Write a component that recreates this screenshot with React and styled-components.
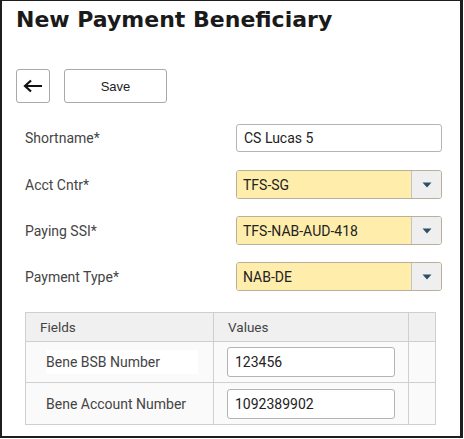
import React from 'react';
import styled, { createGlobalStyle } from 'styled-components';

const GlobalStyle = createGlobalStyle`
  html, body {
    margin: 0;
    padding: 0;
    background: #fff;
  }
  body {
    font-family: Roboto, "Liberation Sans", sans-serif;
  }
`;

const rows = [
  { label: 'Shortname*', value: 'CS Lucas 5', select: false },
  { label: 'Acct Cntr*', value: 'TFS-SG', select: true },
  { label: 'Paying SSI*', value: 'TFS-NAB-AUD-418', select: true },
  { label: 'Payment Type*', value: 'NAB-DE', select: true },
];

const fields = [
  { name: 'Bene BSB Number', value: '123456', boxed: true },
  { name: 'Bene Account Number', value: '1092389902', boxed: false },
];

function ArrowLeft() {
  return (
    <svg width="20" height="14" viewBox="0 0 20 14">
      <path d="M19 7H2.5M8 1.5L2 7l6 5.5" fill="none" stroke="#111" strokeWidth="2.2" />
    </svg>
  );
}

function Caret() {
  return (
    <svg width="10" height="6" viewBox="0 0 10 6">
      <path d="M0.5 0.5h9L5 5.5z" fill="#2f4e66" />
    </svg>
  );
}

export default function App() {
  return (
    <>
      <GlobalStyle />
      <Frame>
        <Title>New Payment Beneficiary</Title>
        <Toolbar>
          <IconButton aria-label="Back"><ArrowLeft /></IconButton>
          <SaveButton>Save</SaveButton>
        </Toolbar>
        <Form>
          {rows.map(r => (
            <Row key={r.label}>
              <Label>{r.label}</Label>
              {r.select ? (
                <Select>
                  <SelectValue>{r.value}</SelectValue>
                  <SelectToggle><Caret /></SelectToggle>
                </Select>
              ) : (
                <TextBox>{r.value}</TextBox>
              )}
            </Row>
          ))}
        </Form>
        <Table>
          <HeadRow>
            <HeadCell>Fields</HeadCell>
            <HeadCell>Values</HeadCell>
            <HeadCell />
          </HeadRow>
          {fields.map(f => (
            <BodyRow key={f.name}>
              <FieldCell>
                <FieldName $boxed={f.boxed}>{f.name}</FieldName>
              </FieldCell>
              <ValueCell>
                <CellInput>{f.value}</CellInput>
              </ValueCell>
              <EmptyCell />
            </BodyRow>
          ))}
        </Table>
      </Frame>
    </>
  );
}

const Frame = styled.div`
  box-sizing: border-box;
  width: 463px;
  height: 438px;
  border: 2px solid #1e1e1e;
  border-top-width: 1px;
  border-right-width: 3px;
  display: flex;
  flex-direction: column;
  padding: 0 0 0 14px;
`;

const Title = styled.h1`
  margin: 5px 0 0 0;
  font-family: "DejaVu Sans", Verdana, sans-serif;
  font-weight: bold;
  font-size: 22px;
  line-height: 28px;
  color: #1a1a1a;
`;

const Toolbar = styled.div`
  display: flex;
  gap: 14px;
  margin-top: 35px;
`;

const buttonBase = `
  box-sizing: border-box;
  height: 34px;
  background: #fff;
  border: 1px solid #a9a9a9;
  border-radius: 3px;
  display: flex;
  align-items: center;
  justify-content: center;
  padding: 0;
`;

const IconButton = styled.button`
  ${buttonBase}
  width: 34px;
`;

const SaveButton = styled.button`
  ${buttonBase}
  width: 103px;
  font-family: "Liberation Sans", Arial, sans-serif;
  font-size: 13px;
  color: #222;
`;

const Form = styled.div`
  display: flex;
  flex-direction: column;
  gap: 18px;
  margin-top: 21px;
  padding-left: 9px;
`;

const Row = styled.div`
  display: grid;
  grid-template-columns: 211px 206px;
  align-items: center;
  height: 28px;
`;

const Label = styled.span`
  font-size: 14px;
  color: #444;
`;

const TextBox = styled.div`
  box-sizing: border-box;
  height: 28px;
  border: 1px solid #b4b4b4;
  border-radius: 3px;
  padding: 0 7px;
  display: flex;
  align-items: center;
  font-size: 14px;
  color: #222;
  background: #fff;
`;

const Select = styled.div`
  box-sizing: border-box;
  height: 29px;
  display: flex;
  border: 1px solid #b9b09a;
  border-radius: 3px;
  overflow: hidden;
`;

const SelectValue = styled.div`
  flex: 1;
  background: #ffeeab;
  display: flex;
  align-items: center;
  padding: 0 6px;
  font-size: 14px;
  color: #222;
`;

const SelectToggle = styled.div`
  width: 29px;
  background: #efefef;
  border-left: 1px solid #c4c4c4;
  display: flex;
  align-items: center;
  justify-content: center;
`;

const Table = styled.div`
  box-sizing: border-box;
  width: 411px;
  margin: 22px 0 0 9px;
  border: 1px solid #cfcfcf;
  display: grid;
  grid-template-columns: 188px 195px 1fr;
`;

const HeadRow = styled.div`
  display: contents;
`;

const HeadCell = styled.div`
  height: 28px;
  background: #f0f0f0;
  border-right: 1px solid #cfcfcf;
  border-bottom: 1px solid #cfcfcf;
  display: flex;
  align-items: center;
  padding-left: 14px;
  font-size: 13.5px;
  color: #444;
  &:last-child { border-right: none; padding-left: 0; }
`;

const BodyRow = styled.div`
  display: contents;
  &:last-child > div { border-bottom: none; }
`;

const cellBase = `
  box-sizing: border-box;
  height: 41px;
  background: #fafafa;
  border-right: 1px solid #cfcfcf;
  border-bottom: 1px solid #cfcfcf;
  display: flex;
  align-items: center;
`;

const FieldCell = styled.div`
  ${cellBase}
  padding-left: 20px;
`;

const FieldName = styled.span`
  font-size: 14px;
  color: #444;
  white-space: nowrap;
  padding: ${p => (p.$boxed ? '4px 38px 4px 0' : '0')};
  background: ${p => (p.$boxed ? '#ffffff' : 'transparent')};
`;

const ValueCell = styled.div`
  ${cellBase}
  padding-left: 13px;
`;

const EmptyCell = styled.div`
  ${cellBase}
  border-right: none;
`;

const CellInput = styled.div`
  box-sizing: border-box;
  width: 168px;
  height: 30px;
  border: 1px solid #b4b4b4;
  border-radius: 3px;
  background: #fff;
  display: flex;
  align-items: center;
  padding: 0 7px;
  font-size: 14px;
  color: #222;
`;
